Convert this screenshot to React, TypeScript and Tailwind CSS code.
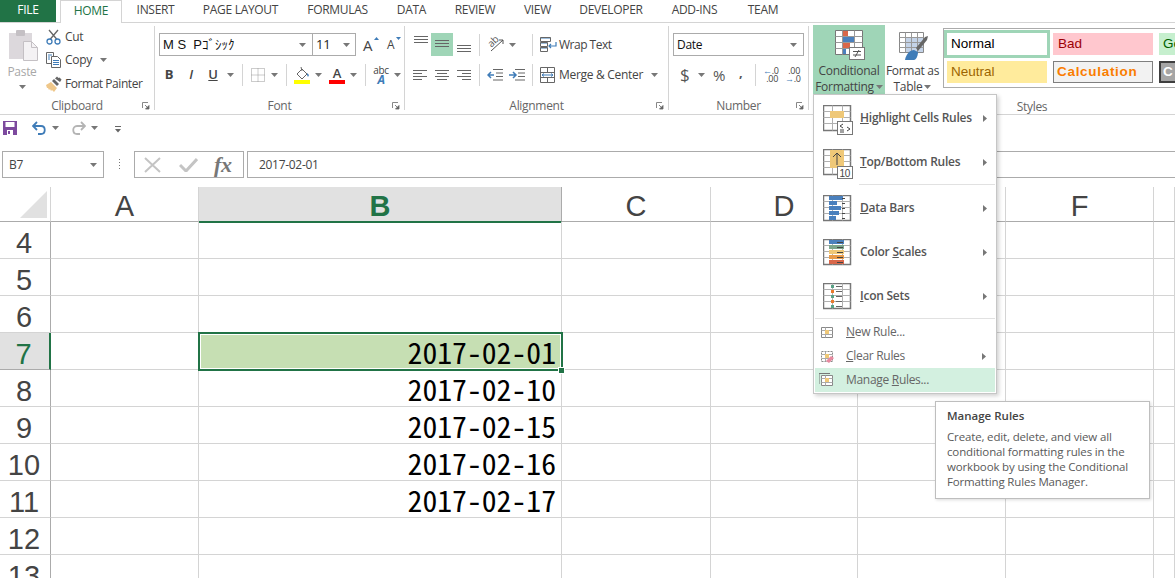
import type { ReactNode } from 'react';

function Caret({ className = '' }: { className?: string }) {
  return (
    <svg width="7" height="4" viewBox="0 0 7 4" className={`shrink-0 ${className}`}>
      <path d="M0 0h7L3.5 4z" fill="#777" />
    </svg>
  );
}

function Launcher() {
  return (
    <svg width="8" height="8" viewBox="0 0 8 8" className="absolute right-[4px] top-[3px]">
      <path d="M.5 6V.5H6" fill="none" stroke="#888" />
      <path d="M3 3l3 3M7 3.5V7H3.5z" fill="#666" stroke="#666" strokeWidth=".8" />
    </svg>
  );
}

function Sep({ className = '' }: { className?: string }) {
  return <div className={`w-px h-[22px] bg-[#d4d4d4] shrink-0 ${className}`} />;
}

function Group({ className, label, launcher, children }: { className: string; label: string; launcher?: boolean; children: ReactNode }) {
  return (
    <div className={`flex flex-col h-[84px] mt-[3px] shrink-0 ${className}`}>
      <div className="h-[73px] shrink-0">{children}</div>
      <div className="relative h-[14px] shrink-0 leading-[14px] text-center text-[#666]">
        {label}
        {launcher && <Launcher />}
      </div>
    </div>
  );
}

function Lines({ rows, className = '' }: { rows: [number, number, number][]; className?: string }) {
  return (
    <svg width="16" height="18" viewBox="0 0 16 18" className={`shrink-0 ${className}`}>
      {rows.map(([x1, x2, y], i) => (
        <path key={i} d={`M${x1} ${y + 0.5}H${x2}`} stroke="#666" />
      ))}
    </svg>
  );
}

function PasteIcon() {
  return (
    <svg width="30" height="32" viewBox="0 0 30 32">
      <rect x="0" y="4" width="23" height="26" fill="#dcd8dc" />
      <rect x="7" y="1" width="9" height="6" rx="1" fill="#c4c0c4" />
      <path d="M14.5 12.5h8l6 6v13h-14z" fill="#f4f2f4" stroke="#c4c0c4" />
      <path d="M22.5 12.5v6h6" fill="none" stroke="#c4c0c4" />
    </svg>
  );
}

function CutIcon() {
  return (
    <svg width="16" height="16" viewBox="0 0 16 16">
      <path d="M3 1l8 9.500M12 1L4 10.500" stroke="#666" strokeWidth="1.300" fill="none" />
      <circle cx="3.500" cy="12.500" r="2.500" fill="none" stroke="#3f7cb8" strokeWidth="1.300" />
      <circle cx="11.500" cy="12.500" r="2.500" fill="none" stroke="#3f7cb8" strokeWidth="1.300" />
    </svg>
  );
}

function CopyIcon() {
  return (
    <svg width="16" height="16" viewBox="0 0 16 16">
      <path d="M.5.5h7v11h-7z" fill="#fff" stroke="#666" />
      <path d="M5.500 4.500h6l3 3v8h-9z" fill="#fff" stroke="#666" />
      <path d="M2 3h4M2 5h2M2 7h2M7 8.500h6M7 10.500h6M7 12.500h6" stroke="#3f7cb8" />
    </svg>
  );
}

function BrushIcon() {
  return (
    <svg width="16" height="16" viewBox="0 0 16 16">
      <path d="M0 9l5-3 6 6-3 4-2-2-1 1-1-2-1 1-1-2-1 0z" fill="#efc78a" />
      <path d="M6 5l2-2 5 5-2 2z" fill="#666" />
      <path d="M9 2.500L11 .5l1.500 1.500 1-.5 2 2-.5 1L14 6z" fill="#666" />
    </svg>
  );
}

function ClipboardGroup() {
  return (
    <Group className="w-[155px] border-r border-[#d4d4d4]" label="Clipboard" launcher>
      <div className="flex pl-[7px] pt-[3px]">
        <div className="flex flex-col items-center w-[30px] text-[#a8a8a8]">
          <div className="self-start ml-[2px] h-[32px]"><PasteIcon /></div>
          <span className="mt-[2px] leading-[18px]">Paste</span>
          <Caret className="mt-[4px]" />
        </div>
        <div className="ml-[9px] -mt-[4px] flex flex-col">
          <div className="flex items-center gap-[3px] h-[24px]"><CutIcon /><span>Cut</span></div>
          <div className="flex items-center gap-[3px] h-[22px]">
            <CopyIcon /><span>Copy</span><Caret className="ml-[5px]" />
          </div>
          <div className="flex items-center gap-[3px] h-[25px]"><BrushIcon /><span className="tracking-[-0.45px]">Format Painter</span></div>
        </div>
      </div>
    </Group>
  );
}

function BorderIcon() {
  return (
    <svg width="14" height="14" viewBox="0 0 14 14" className="shrink-0">
      <path d="M.5.5h13v13H.5zM7 .5v13M.5 7h13" fill="none" stroke="#999" strokeDasharray="1 1" />
    </svg>
  );
}

function FillIcon() {
  return (
    <svg width="16" height="18" viewBox="0 0 16 18" className="shrink-0">
      <path d="M3 8l5-5 5 5-5 5z" fill="#fff" stroke="#666" />
      <path d="M7 1l1 4" stroke="#666" />
      <path d="M13 7l2 2-1 2-1-2z" fill="#3f7cb8" />
      <rect x="0" y="14" width="16" height="4" fill="#ffff00" />
    </svg>
  );
}

function FontGroup() {
  return (
    <Group className="w-[250px] border-r border-[#d4d4d4]" label="Font" launcher>
      <div className="flex items-center pl-[4px] pt-[7px]">
        <div className="flex items-center justify-between w-[154px] h-[23px] border border-[#ababab] pl-[3px] pr-[6px]">
          <span className="text-[13px] text-[#111] tracking-normal whitespace-pre [font-family:'Liberation_Sans','Noto_Sans_CJK_JP',sans-serif]">M S  Pｺﾞｼｯｸ</span>
          <Caret />
        </div>
        <div className="flex items-center justify-between w-[43px] h-[23px] border border-l-0 border-[#ababab] pl-[3px] pr-[5px]">
          <span className="text-[13px] text-[#222]">11</span>
          <Caret />
        </div>
        <div className="relative ml-[7px] w-[15px] text-[15px] leading-[18px]">
          A
          <svg width="5" height="3" viewBox="0 0 5 3" className="absolute right-[-1px] top-[1px]"><path d="M0 3h5L2.500 0z" fill="#3f7cb8" /></svg>
        </div>
        <div className="relative ml-[9px] w-[13px] text-[12px] leading-[18px] pt-[1px]">
          A
          <svg width="5" height="3" viewBox="0 0 5 3" className="absolute right-[-1px] top-[2px]"><path d="M0 0h5L2.500 3z" fill="#3f7cb8" /></svg>
        </div>
      </div>
      <div className="flex items-center pl-[6px] mt-[8px] h-[22px]">
        <span className="w-[16px] text-center font-bold text-[13px]">B</span>
        <span className="ml-[6px] w-[16px] text-center italic font-semibold text-[13px]">I</span>
        <span className="ml-[6px] w-[16px] text-center underline font-semibold text-[13px]">U</span>
        <Caret className="ml-[6px]" />
        <Sep className="ml-[8px]" />
        <div className="ml-[8px]"><BorderIcon /></div>
        <Caret className="ml-[6px]" />
        <Sep className="ml-[8px]" />
        <div className="ml-[7px]"><FillIcon /></div>
        <Caret className="ml-[5px]" />
        <div className="ml-[7px] w-[16px] h-[18px] flex flex-col items-center">
          <span className="font-semibold text-[13px] leading-[14px]">A</span>
          <div className="w-[16px] h-[4px] bg-[#ff0000]" />
        </div>
        <Caret className="ml-[5px]" />
        <Sep className="ml-[8px]" />
        <div className="ml-[8px] w-[14px] flex flex-col items-center leading-[10px]">
          <span className="text-[10px]">abc</span>
          <span className="text-[12px] font-bold italic text-[#3f7cb8]">A</span>
        </div>
        <Caret className="ml-[6px]" />
      </div>
    </Group>
  );
}

function AlignmentGroup() {
  return (
    <Group className="w-[264px] border-r border-[#d4d4d4]" label="Alignment" launcher>
      <div className="flex items-center pl-[6px] pt-[7px] h-[30px]">
        <div className="w-[20px] h-[23px] flex justify-center pt-[2px]"><Lines rows={[[1, 15, 1], [1, 15, 4], [1, 15, 7]]} /></div>
        <div className="w-[22px] h-[23px] bg-[#9fd5b7] flex justify-center pt-[5px]"><Lines rows={[[1, 15, 2], [1, 15, 5], [1, 15, 8]]} /></div>
        <div className="w-[22px] h-[23px] flex justify-center pt-[11px]"><Lines rows={[[1, 15, 1], [1, 15, 4], [1, 15, 7]]} /></div>
        <Sep className="ml-[4px]" />
        <div className="relative ml-[7px] w-[17px] h-[17px] shrink-0">
          <span className="absolute left-[0px] top-[0px] text-[10px] leading-[10px] -rotate-45 text-[#555]">ab</span>
          <svg width="17" height="17" viewBox="0 0 17 17" className="absolute inset-0">
            <path d="M4 15L16 4M16 4h-4M16 4v4" fill="none" stroke="#555" />
          </svg>
        </div>
        <Caret className="ml-[5px]" />
        <Sep className="ml-[16px]" />
        <svg width="17" height="16" viewBox="0 0 17 16" className="ml-[7px] shrink-0">
          <path d="M.5 1h10M.5 6h7M.5 11h7" stroke="#3f7cb8" />
          <path d="M.5.5h10v4H.5zM.5 5.500h7v4H.5zM.5 10.500h7v4H.5z" fill="none" stroke="#666" />
          <path d="M16 5v4H9M11 7L9 9l2 2" fill="none" stroke="#3f7cb8" strokeWidth="1.200" />
        </svg>
        <span className="ml-[2px] tracking-[-0.5px]">Wrap Text</span>
      </div>
      <div className="flex items-center pl-[7px] mt-[8px] h-[22px]">
        <Lines rows={[[1, 15, 4], [1, 10, 7], [1, 15, 10], [1, 10, 13]]} />
        <Lines className="ml-[6px]" rows={[[1, 15, 4], [3, 13, 7], [1, 15, 10], [3, 13, 13]]} />
        <Lines className="ml-[6px]" rows={[[1, 15, 4], [6, 15, 7], [1, 15, 10], [6, 15, 13]]} />
        <Sep className="ml-[7px]" />
        <svg width="17" height="12" viewBox="0 0 17 12" className="ml-[7px] shrink-0">
          <path d="M6 .5h10M9 4h7M9 7.500h7M6 11h10" stroke="#666" />
          <path d="M7 6H1M4 3L1 6l3 3" fill="none" stroke="#3f7cb8" strokeWidth="1.500" />
        </svg>
        <svg width="17" height="12" viewBox="0 0 17 12" className="ml-[5px] shrink-0">
          <path d="M6 .5h10M9 4h7M9 7.500h7M6 11h10" stroke="#666" />
          <path d="M0 6h6M4 3l3 3-3 3" fill="none" stroke="#3f7cb8" strokeWidth="1.500" />
        </svg>
        <Sep className="ml-[6px]" />
        <svg width="16" height="16" viewBox="0 0 16 16" className="ml-[7px] shrink-0">
          <path d="M.5.5h14v15H.5zM.5 5.500h14M.5 10.500h14M7.500.5v5M7.500 10.500v5" fill="none" stroke="#666" />
          <path d="M2 8h11M4 6.500L2 8l2 1.500M11 6.500L13 8l-2 1.500" fill="none" stroke="#3f7cb8" />
        </svg>
        <span className="ml-[3px]">Merge &amp; Center</span>
        <Caret className="ml-[8px]" />
      </div>
    </Group>
  );
}

function NumberGroup() {
  return (
    <Group className="w-[140px] border-r border-[#d4d4d4]" label="Number" launcher>
      <div className="pl-[4px] pt-[7px]">
        <div className="flex items-center justify-between w-[131px] h-[23px] border border-[#ababab] pl-[3px] pr-[6px]">
          <span className="text-[#111]">Date</span>
          <Caret />
        </div>
      </div>
      <div className="flex items-center pl-[11px] mt-[8px] h-[22px]">
        <span className="w-[9px] text-[17px] text-[#555]">$</span>
        <Caret className="ml-[9px]" />
        <span className="ml-[8px] w-[14px] text-[15px] text-[#555]">%</span>
        <span className="ml-[12px] w-[6px] pb-[7px] font-bold text-[13px] leading-[16px] text-[#555]">,</span>
        <Sep className="ml-[10px]" />
        <div className="ml-[7px] w-[15px] flex flex-col text-[9px] leading-[8px] text-right">
          <span><span className="text-[#3f7cb8]">←</span>.0</span>
          <span>.00</span>
        </div>
        <div className="ml-[7px] w-[15px] flex flex-col text-[9px] leading-[8px] text-right">
          <span>.00</span>
          <span><span className="text-[#3f7cb8]">→</span>.0</span>
        </div>
      </div>
    </Group>
  );
}

function ConditionalIcon() {
  return (
    <svg width="31" height="31" viewBox="0 0 31 31">
      <path d="M.5.500h27v24H.5z" fill="#fff" stroke="#777" />
      <path d="M7.500.5v24M19.500.5v24M.5 6.500h27M.5 12.500h27M.5 18.500h27" stroke="#999" />
      <rect x="8" y="1" width="5" height="5" fill="#d9674a" />
      <rect x="8" y="7" width="11" height="5" fill="#4a80bd" />
      <rect x="8" y="13" width="7" height="5" fill="#d9674a" />
      <rect x="8" y="19" width="3" height="5" fill="#4a80bd" />
      <rect x="14.500" y="17.500" width="15" height="12" fill="#fff" stroke="#777" />
      <path d="M18 21.500h8M18 25h8M24 20l-4 7" stroke="#555" />
    </svg>
  );
}

function TableIcon() {
  return (
    <svg width="30" height="29" viewBox="0 0 30 29">
      <path d="M.5.500h24v20H.5z" fill="#fff" stroke="#888" />
      <rect x="6" y="5" width="18" height="15" fill="#c4d3e8" />
      <path d="M6.500.5v20M12.500.5v20M18.500.5v20M.5 5.500h24M.5 10.500h24M.5 15.500h24" stroke="#999" />
      <path d="M17 16l9-11 3-1-1 4-9 11z" fill="#666" />
      <path d="M6 28c1-6 5-10 9-10l4 2c0 4-2 8-4 8z" fill="#3f7cb8" />
    </svg>
  );
}

function StyleChip({ className, children }: { className: string; children: ReactNode }) {
  return <div className={`flex items-center h-[22px] shrink-0 ${className}`}>{children}</div>;
}

function StylesGroup() {
  return (
    <div className="flex flex-col h-[84px] mt-[2px] flex-1 min-w-0 ml-[4px]">
      <div className="flex h-[70px] shrink-0">
        <div className="w-[72px] h-[69px] bg-[#9fd5b7] flex flex-col items-center pt-[5px] shrink-0 leading-[16px]">
          <div className="h-[31px] ml-[2px]"><ConditionalIcon /></div>
          <span className="mt-[2px]">Conditional</span>
          <span className="flex items-center gap-[2px]">Formatting<Caret /></span>
        </div>
        <div className="w-[55px] flex flex-col items-center pt-[7px] shrink-0 leading-[16px]">
          <div className="h-[29px] ml-[2px]"><TableIcon /></div>
          <span className="mt-[2px] whitespace-nowrap">Format as</span>
          <span className="flex items-center gap-[2px]">Table<Caret /></span>
        </div>
        <div className="ml-[3px] mt-[3px] w-[235px] h-[60px] border border-[#ababab] border-r-0 flex flex-col gap-[3px] pt-[1px] overflow-hidden tracking-normal [font-family:'Liberation_Sans',sans-serif] text-[13.500px]">
          <div className="flex items-center">
            <div className="w-[106px] h-[28px] border-[3px] border-[#9fd5b7] flex items-center pl-[4px] text-black shrink-0">Normal</div>
            <StyleChip className="w-[100px] ml-[3px] pl-[5px] bg-[#ffc7ce] text-[#9c0006]">Bad</StyleChip>
            <StyleChip className="w-[40px] ml-[6px] pl-[4px] bg-[#c6efce] text-[#006100]">Good</StyleChip>
          </div>
          <div className="flex items-center pl-[3px]">
            <StyleChip className="w-[100px] pl-[4px] bg-[#ffeb9c] text-[#9c6500]">Neutral</StyleChip>
            <StyleChip className="w-[100px] ml-[6px] pl-[3px] bg-[#f2f2f2] border border-[#7f7f7f] text-[#fa7d00] font-bold tracking-[0.7px]">Calculation</StyleChip>
            <StyleChip className="w-[40px] ml-[6px] pl-[2px] bg-[#a5a5a5] border-2 border-[#3f3f3f] text-white font-bold"><span className="w-[10px] overflow-hidden">Check</span></StyleChip>
          </div>
        </div>
      </div>
      <div className="h-[14px] mt-[5px] shrink-0 leading-[14px] text-center text-[#666] pl-[76px]">Styles</div>
    </div>
  );
}

const tabs = [
  { label: 'INSERT', className: 'w-[37px]' },
  { label: 'PAGE LAYOUT', className: 'w-[75px]' },
  { label: 'FORMULAS', className: 'w-[61px]' },
  { label: 'DATA', className: 'w-[29px]' },
  { label: 'REVIEW', className: 'w-[40px]' },
  { label: 'VIEW', className: 'w-[27px]' },
  { label: 'DEVELOPER', className: 'w-[62px]' },
  { label: 'ADD-INS', className: 'w-[47px]' },
  { label: 'TEAM', className: 'w-[32px]' },
];

function TabBar() {
  return (
    <div className="flex h-[23px] border-b border-[#d4d4d4]">
      <div className="w-[56px] h-[22px] bg-[#217346] text-white text-center leading-[20px]">FILE</div>
      <div className="ml-[4px] w-[62px] h-[23px] bg-white border border-b-0 border-[#d4d4d4] text-center leading-[19px] text-[#217346]">HOME</div>
      <div className="flex ml-[15px] gap-[29px] leading-[20px]">
        {tabs.map((t) => (
          <div key={t.label} className={`${t.className} text-center whitespace-nowrap flex justify-center`}>{t.label}</div>
        ))}
      </div>
    </div>
  );
}

function Ribbon() {
  return (
    <div className="flex h-[92px] border-b border-[#d4d4d4]">
      <ClipboardGroup />
      <FontGroup />
      <AlignmentGroup />
      <NumberGroup />
      <StylesGroup />
    </div>
  );
}

function QuickAccess() {
  return (
    <div className="flex items-start h-[36px] pt-[6px] pl-[3px]">
      <svg width="14" height="14" viewBox="0 0 14 14" className="shrink-0">
        <path d="M0 0h14v14H0z" fill="#7d4a9e" />
        <rect x="2.500" y="1" width="9" height="5" fill="#fff" />
        <rect x="4" y="9" width="6" height="5" fill="#fff" />
        <rect x="5" y="10" width="2" height="3" fill="#7d4a9e" />
      </svg>
      <svg width="15" height="14" viewBox="0 0 15 14" className="ml-[15px] shrink-0">
        <path d="M1 5h8c5 0 5 8 0 8H6" fill="none" stroke="#3f7cb8" strokeWidth="1.800" />
        <path d="M5 1L1 5l4 4" fill="none" stroke="#3f7cb8" strokeWidth="1.800" />
      </svg>
      <Caret className="ml-[5px] mt-[5px]" />
      <svg width="15" height="14" viewBox="0 0 15 14" className="ml-[12px] shrink-0">
        <path d="M14 5H6c-5 0-5 8 0 8h3" fill="none" stroke="#b4b4b4" strokeWidth="1.800" />
        <path d="M10 1l4 4-4 4" fill="none" stroke="#b4b4b4" strokeWidth="1.800" />
      </svg>
      <Caret className="ml-[5px] mt-[5px]" />
      <svg width="6" height="7" viewBox="0 0 6 7" className="ml-[17px] mt-[5px] shrink-0">
        <path d="M0 .5h6" stroke="#666" />
        <path d="M0 3h6L3 6.500z" fill="#666" />
      </svg>
    </div>
  );
}

function FormulaBar() {
  return (
    <div className="flex h-[27px] text-[#444]">
      <div className="ml-[2px] w-[102px] border border-[#ababab] flex items-center justify-between pl-[6px] pr-[6px] shrink-0">
        <span className="text-[#444]">B7</span>
        <Caret />
      </div>
      <div className="w-[30px] flex items-center justify-center shrink-0">
        <svg width="3" height="11" viewBox="0 0 3 11"><path d="M1 0h1v1H1zM1 3h1v1H1zM1 6h1v1H1zM1 9h1v1H1z" fill="#777" /></svg>
      </div>
      <div className="w-[110px] border border-[#ababab] flex items-center shrink-0">
        <svg width="17" height="16" viewBox="0 0 17 16" className="ml-[9px]"><path d="M1 1l15 14M16 1L1 15" stroke="#c4c4c4" strokeWidth="2" /></svg>
        <svg width="19" height="15" viewBox="0 0 19 15" className="ml-[18px]"><path d="M1 8l6 6L18 2" fill="none" stroke="#c4c4c4" strokeWidth="3" /></svg>
        <span className="ml-[16px] [font-family:'Liberation_Serif',serif] italic font-bold text-[22px] text-[#777] leading-[24px]">fx</span>
      </div>
      <div className="ml-[3px] flex-1 border border-r-0 border-[#ababab] flex items-center pl-[11px] text-[#444]">2017-02-01</div>
    </div>
  );
}

const dates: Record<number, string> = {
  7: '2017-02-01',
  8: '2017-02-10',
  9: '2017-02-15',
  10: '2017-02-16',
  11: '2017-02-17',
};
const columns = ['A', 'B', 'C', 'D', 'E', 'F', ''];
const rows = [4, 5, 6, 7, 8, 9, 10, 11, 12, 13];

function Sheet() {
  return (
    <div className="h-[391px] overflow-hidden mt-[9px]">
      <div className="grid grid-cols-[51px_148px_363px_149px_147px_148px_148px_21px] grid-rows-[35px] auto-rows-[37px] tracking-normal [font-family:'Liberation_Sans',sans-serif]">
        <div className="border-r border-b border-r-[#d4d4d4] border-b-[#ababab] relative">
          <svg width="27" height="27" viewBox="0 0 27 27" className="absolute left-[20px] top-[4px]"><path d="M27 0v27H0z" fill="#e1e1e1" /></svg>
        </div>
        {columns.map((c) =>
          c === 'B' ? (
            <div key={c} className="bg-[#e1e1e1] border-b-2 border-[#217346] border-r border-r-[#ababab] -mb-px text-center text-[29px] leading-[39px] font-bold text-[#217346]">{c}</div>
          ) : (
            <div key={c} className="border-r border-b border-r-[#d4d4d4] border-b-[#ababab] text-center text-[29px] leading-[39px] text-[#444]">{c}</div>
          ),
        )}
        {rows.map((r) => (
          <div key={r} className="contents">
            {r === 7 ? (
              <div className="bg-[#e1e1e1] border-r-2 border-[#217346] border-b border-b-[#ababab] text-center text-[29px] leading-[43px] text-[#217346] pr-[2px]">{r}</div>
            ) : (
              <div className="border-r border-b border-r-[#ababab] border-b-[#d4d4d4] text-center text-[29px] leading-[43px] text-[#444] pr-[2px]">{r}</div>
            )}
            {columns.map((c) => (
              <div key={c} className="relative border-r border-b border-[#d4d4d4]">
                {c === 'B' && dates[r] && (
                  <div className={`h-full text-right pr-[5px] text-[29.700px] leading-[37px] text-black [font-family:'Noto_Sans_CJK_JP',sans-serif] [font-feature-settings:'hwid'] ${r === 7 ? 'bg-[#c6dfb3]' : ''}`}>{dates[r]}</div>
                )}
                {c === 'B' && r === 7 && (
                  <div className="absolute z-10 -left-px -top-px w-[365px] h-[39px] border-2 border-[#217346] shadow-[inset_0_0_0_1px_white]">
                    <div className="absolute -right-[3px] -bottom-[4px] w-[5px] h-[5px] bg-[#217346] outline outline-white" />
                  </div>
                )}
              </div>
            ))}
          </div>
        ))}
      </div>
    </div>
  );
}

function MenuFrame({ children }: { children: ReactNode }) {
  return (
    <svg width="32" height="30" viewBox="0 0 32 30" className="shrink-0">
      <path d="M.5.500h27v25H.5z" fill="#fff" stroke="#777" strokeWidth="1.500" />
      {children}
    </svg>
  );
}

const gridLines = 'M9.500.5v25M19.500.5v25M.5 6.500h27M.5 12.500h27M.5 18.500h27';

function BigIcon({ name }: { name: string }) {
  if (name === 'highlight')
    return (
      <MenuFrame>
        <path d={gridLines} stroke="#b0b0b0" />
        <rect x="7" y="6" width="14" height="7" fill="#efc878" />
        <rect x="14.500" y="16.500" width="15" height="13" fill="#fff" stroke="#777" />
        <path d="M20 19l-3 2 3 2M17 25h4M17 27h4M24 22l3 2-3 2" fill="none" stroke="#444" />
      </MenuFrame>
    );
  if (name === 'top')
    return (
      <MenuFrame>
        <path d={gridLines} stroke="#b0b0b0" />
        <rect x="7" y="1" width="14" height="18" fill="#efc878" />
        <path d="M14 16V4M10 8l4-4 4 4" fill="none" stroke="#444" />
        <rect x="14.500" y="17.500" width="15" height="12" fill="#fff" stroke="#777" />
        <text x="16.500" y="27.500" fontSize="10" fill="#444" className="[font-family:'Liberation_Sans',sans-serif]">10</text>
      </MenuFrame>
    );
  if (name === 'bars')
    return (
      <MenuFrame>
        <path d={gridLines} stroke="#b0b0b0" />
        {[[1, 14], [6, 8], [11, 12], [16, 10], [21, 7]].map(([y, w], i) => (
          <rect key={i} x="6" y={y} width={w} height="4" fill="#4a80bd" />
        ))}
        <path d="M19 3.500h3M19 8.500h3M19 13.500h3M19 18.500h3M19 23.500h3" stroke="#444" />
      </MenuFrame>
    );
  if (name === 'scales')
    return (
      <MenuFrame>
        <path d={gridLines} stroke="#b0b0b0" />
        {['#4a80bd', '#7ca68c', '#efc878', '#e89a4a', '#d9674a'].map((c, i) => (
          <rect key={c} x="6" y={1 + i * 5} width="15" height="4" fill={c} />
        ))}
        <path d="M14 3.500h6M14 8.500h6M14 13.500h6M14 18.500h6M14 23.500h6" stroke="#444" />
      </MenuFrame>
    );
  return (
    <MenuFrame>
      <path d={gridLines} stroke="#b0b0b0" />
      {['#5aa287', '#e87b2e', '#5aa287', '#e87b2e', '#5aa287'].map((c, i) => (
        <rect key={i} x="8" y={2 + i * 5} width="3" height="3" fill={c} />
      ))}
      <path d="M13 3.500h6M13 8.500h6M13 13.500h6M13 18.500h6M13 23.500h6" stroke="#666" />
    </MenuFrame>
  );
}

function SubCaret() {
  return (
    <svg width="4" height="7" viewBox="0 0 4 7" className="ml-auto mr-[9px] shrink-0">
      <path d="M0 0l4 3.500L0 7z" fill="#777" />
    </svg>
  );
}

function BigItem({ icon, className = '', children }: { icon: string; className?: string; children: ReactNode }) {
  return (
    <div className={`flex items-center h-[44px] pl-[9px] ${className}`}>
      <div className="w-[37px] pt-[3px]"><BigIcon name={icon} /></div>
      <span className="font-semibold text-[#555] tracking-[-0.25px] whitespace-nowrap">{children}</span>
      <SubCaret />
    </div>
  );
}

function SmallIcon({ eraser, stack }: { eraser?: boolean; stack?: boolean }) {
  return (
    <svg width="16" height="14" viewBox="0 0 16 14" className="shrink-0">
      {stack && <path d="M0 11V.5h11" fill="none" stroke="#777" />}
      <path d="M2.500 2.500h11v10h-11z" fill="#fff" stroke="#888" strokeDasharray={eraser ? '2 1' : undefined} />
      <path d="M6.500 2.500v10M2.500 5.500h11M2.500 9.500h11" stroke="#aaa" />
      <rect x="6" y="5" width="4" height="4" fill="#efc878" />
      {eraser && <path d="M7 12l5-5 3 2-5 5z" fill="#e88aa0" />}
    </svg>
  );
}

function SmallItem({ icon, active, arrow, children }: { icon: ReactNode; active?: boolean; arrow?: boolean; children: ReactNode }) {
  return (
    <div className={`flex items-center h-[24px] mx-px pl-[4px] ${active ? 'bg-[#d3f0e0]' : ''}`}>
      <div className="w-[27px]">{icon}</div>
      <span className="text-[#666] whitespace-nowrap">{children}</span>
      {arrow && <SubCaret />}
    </div>
  );
}

function CondFormatMenu() {
  return (
    <div className="absolute left-[813px] top-[94px] w-[184px] h-[300px] bg-white border border-[#c6c6c6] shadow-[2px_2px_4px_rgba(0,0,0,0.18)] pt-px">
      <BigItem icon="highlight"><u>H</u>ighlight Cells Rules</BigItem>
      <BigItem icon="top"><u>T</u>op/Bottom Rules</BigItem>
      <div className="h-px ml-[45px] mr-px bg-[#e1e1e1]" />
      <BigItem icon="bars" className="mt-px"><u>D</u>ata Bars</BigItem>
      <BigItem icon="scales">Color <u>S</u>cales</BigItem>
      <BigItem icon="icons"><u>I</u>con Sets</BigItem>
      <div className="h-px mx-px mb-px bg-[#e1e1e1]" />
      <SmallItem icon={<SmallIcon />}><u>N</u>ew Rule...</SmallItem>
      <SmallItem icon={<SmallIcon eraser />} arrow><u>C</u>lear Rules</SmallItem>
      <SmallItem icon={<SmallIcon stack />} active>Manage <u>R</u>ules...</SmallItem>
    </div>
  );
}

function Tooltip() {
  return (
    <div className="absolute left-[935px] top-[401px] w-[215px] h-[98px] bg-white border border-[#bebebe] shadow-[1px_1px_3px_rgba(0,0,0,0.15)] pl-[11px] pt-[6px] text-[11.500px] tracking-[-0.15px] leading-[15px] text-[#595959]">
      <div className="font-semibold text-[#444] tracking-normal mb-[6px]">Manage Rules</div>
      <div>Create, edit, delete, and view all</div>
      <div>conditional formatting rules in the</div>
      <div>workbook by using the Conditional</div>
      <div>Formatting Rules Manager.</div>
    </div>
  );
}

export default function App() {
  return (
    <div className="relative w-[1175px] h-[583px] overflow-hidden bg-white text-[12px] tracking-[-0.3px] text-[#444] [font-family:'Open_Sans',sans-serif]">
      <TabBar />
      <Ribbon />
      <QuickAccess />
      <FormulaBar />
      <Sheet />
      <CondFormatMenu />
      <Tooltip />
    </div>
  );
}
